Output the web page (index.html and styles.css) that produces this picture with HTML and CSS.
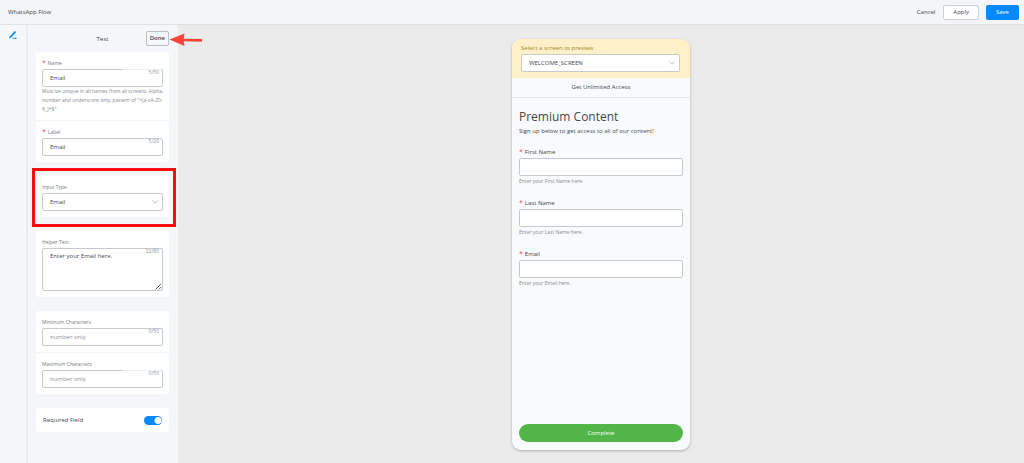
FILE: index.html
```
<!DOCTYPE html>
<html lang="en">
<head>
    <meta charset="UTF-8">
    <meta name="viewport" content="width=device-width, initial-scale=1.0">
    <title>WhatsApp Flow</title>
    <link rel="stylesheet" href="styles.css">
</head>
<body>
    <header class="topbar">
        <h1 class="topbar-title">WhatsApp Flow</h1>
        <div class="topbar-actions">
            <button class="btn btn-link" type="button">Cancel</button>
            <button class="btn btn-outline" type="button">Apply</button>
            <button class="btn btn-primary" type="button">Save</button>
        </div>
    </header>

    <div class="workspace">
        <nav class="rail">
            <button class="rail-button" type="button" aria-label="Edit">
                <svg width="10" height="10" viewBox="0 0 10 10">
                    <path d="M1.2 7.2 L6.2 1.4 Q6.8 0.8 7.4 1.4 L7.8 1.8 Q8.2 2.3 7.7 2.8 L3 7.7 L0.9 8.4 Z" fill="#0d8bf5"/>
                    <path d="M4.6 8.3 H8.6" stroke="#0d8bf5" stroke-width="1"/>
                </svg>
            </button>
        </nav>

        <aside class="panel">
            <div class="panel-head">
                <h2 class="panel-title">Text</h2>
                <button class="done" type="button">Done</button>
                <svg class="arrow" width="34" height="14" viewBox="0 0 34 14">
                    <path d="M14 7 L33 7.4" stroke="#fb4437" stroke-width="2.6"/>
                    <path d="M0.5 6.5 L15.5 0.5 L14.5 7 L15.5 13 Z" fill="#fb4437"/>
                </svg>
            </div>

            <section class="card">
                <div class="field">
                    <label class="label required" for="name">Name</label>
                    <div class="control notched">
                        <input class="input" id="name" type="text" value="Email">
                        <span class="count">5/50</span>
                    </div>
                    <p class="hint">Must be unique in all names from all screens. Alpha, number and underscore only, pattern of "^[a-zA-Z0-<wbr>9_]+$"</p>
                </div>
                <div class="field">
                    <label class="label required" for="label">Label</label>
                    <div class="control">
                        <input class="input" id="label" type="text" value="Email">
                        <span class="count">5/20</span>
                    </div>
                </div>
            </section>

            <section class="card highlighted">
                <div class="field">
                    <label class="label" for="type">Input Type</label>
                    <div class="control">
                        <select class="input" id="type">
                            <option>Email</option>
                        </select>
                        <svg class="chevron" width="6" height="4" viewBox="0 0 6 4"><path d="M0.5 0.5 L3 3.2 L5.5 0.5" fill="none" stroke="#a9afb8" stroke-width="0.8"/></svg>
                    </div>
                </div>
            </section>

            <section class="card">
                <div class="field">
                    <label class="label" for="helper">Helper Text</label>
                    <div class="control">
                        <textarea class="input textarea" id="helper">Enter your Email here.</textarea>
                        <span class="count">22/80</span>
                        <svg class="grip" width="7" height="7" viewBox="0 0 7 7"><path d="M0.5 6.5 L6 1 M3.8 6.5 L6.3 4" stroke="#555" stroke-width="0.9"/></svg>
                    </div>
                </div>
            </section>

            <section class="card">
                <div class="field">
                    <label class="label" for="min">Minimum Characters</label>
                    <div class="control">
                        <input class="input" id="min" type="text" placeholder="number only">
                        <span class="count">0/50</span>
                    </div>
                </div>
                <div class="field">
                    <label class="label" for="max">Maximum Characters</label>
                    <div class="control notched">
                        <input class="input" id="max" type="text" placeholder="number only">
                        <span class="count">0/50</span>
                    </div>
                </div>
            </section>

            <section class="card switch-row">
                <label for="required">Required Field</label>
                <input class="switch" id="required" type="checkbox" checked>
            </section>
        </aside>

        <main class="canvas">
            <div class="phone">
                <div class="picker">
                    <label class="picker-label" for="screen">Select a screen to preview</label>
                    <div class="control">
                        <select class="input" id="screen">
                            <option>WELCOME_SCREEN</option>
                        </select>
                        <svg class="chevron" width="6" height="4" viewBox="0 0 6 4"><path d="M0.5 0.5 L3 3.2 L5.5 0.5" fill="none" stroke="#a9afb8" stroke-width="0.8"/></svg>
                    </div>
                </div>
                <div class="phone-title">Get Unlimited Access</div>
                <form class="phone-body">
                    <h2 class="heading">Premium Content</h2>
                    <p class="lead">Sign up below to get access to all of our content!</p>
                    <div class="entry">
                        <label class="entry-label required" for="first">First Name</label>
                        <input class="input" id="first" type="text">
                        <p class="entry-hint">Enter your First Name here.</p>
                    </div>
                    <div class="entry">
                        <label class="entry-label required" for="last">Last Name</label>
                        <input class="input" id="last" type="text">
                        <p class="entry-hint">Enter your Last Name here.</p>
                    </div>
                    <div class="entry">
                        <label class="entry-label required" for="email">Email</label>
                        <input class="input" id="email" type="text">
                        <p class="entry-hint">Enter your Email here.</p>
                    </div>
                    <button class="complete" type="button">Complete</button>
                </form>
            </div>
        </main>
    </div>
</body>
</html>
```
FILE: styles.css
```
* {
    margin: 0;
    padding: 0;
    box-sizing: border-box;
}

body {
    font-family: "Open Sans", "Noto Sans", sans-serif;
    font-size: 6px;
    color: #42474f;
    background: #ebebeb;
    min-height: 100vh;
    display: flex;
    flex-direction: column;
}

button,
input,
select,
textarea {
    font: inherit;
    color: inherit;
}

button {
    cursor: pointer;
}

.topbar {
    display: flex;
    align-items: center;
    justify-content: space-between;
    height: 25px;
    padding: 0 5px 0 8px;
    background: #f4f5f8;
    border-bottom: 1px solid #dfe1e4;
}

.topbar-title {
    font-size: 6px;
    font-weight: 400;
}

.topbar-actions {
    display: flex;
    gap: 7px;
}

.btn {
    height: 15px;
    padding: 0 9px;
    line-height: 13px;
    border: 1px solid transparent;
    border-radius: 2px;
}

.btn-link {
    padding: 0;
    background: none;
}

.btn-outline {
    background: #fff;
    border-color: #cdd1d7;
}

.btn-primary {
    background: #0788fb;
    color: #fff;
}

.workspace {
    flex: 1;
    display: flex;
}

.rail {
    width: 28px;
    padding: 5px 8px;
    background: #f6f7f9;
    border-right: 2px solid #ebecef;
}

.rail-button {
    border: none;
    background: none;
}

.panel {
    width: 150px;
    padding: 6px 9px 14px 8px;
    background: #f5f6f9;
    display: flex;
    flex-direction: column;
    gap: 14px;
}

.panel-head {
    position: relative;
    display: grid;
    grid-template-columns: 1fr auto 1fr;
    align-items: center;
    margin-bottom: -8px;
}

.panel-title {
    grid-column: 2;
    font-size: 6px;
    font-weight: 400;
}

.done {
    justify-self: end;
    height: 15px;
    padding: 0 3px;
    font-weight: 600;
    line-height: 13px;
    background: #f5f6f9;
    border: 1px solid #b9bec7;
    border-radius: 2px;
}

.arrow {
    position: absolute;
    left: 100%;
    top: 2px;
}

.card {
    background: #fff;
    border-radius: 3px;
}

.highlighted {
    position: relative;
}

.highlighted::after {
    content: "";
    position: absolute;
    inset: -8px -7px -10px -4px;
    border: 3px solid #f90d0d;
    pointer-events: none;
}

.field {
    padding: 5px 6px 6px;
}

.field + .field {
    border-top: 1px solid #f3f4f5;
}

.label {
    display: block;
    font-size: 5px;
    line-height: 12px;
    color: #747a83;
}

.required::before {
    content: "*";
    margin-right: 2px;
    font-size: 7px;
    line-height: 1;
    color: #ef5350;
}

.control {
    position: relative;
}

.input {
    display: block;
    width: 100%;
    height: 18px;
    padding: 0 7px;
    background: #fff;
    border: 1px solid #c5cacf;
    border-radius: 2px;
    outline: none;
    appearance: none;
}

.input::placeholder {
    color: #8d9299;
}

.textarea {
    height: 43px;
    padding: 2px 7px;
    line-height: 10px;
    resize: none;
}

.count {
    position: absolute;
    top: 0;
    right: 4px;
    font-size: 5px;
    line-height: 6px;
    color: #8d939b;
}

.notched::after {
    content: "";
    position: absolute;
    top: 0;
    right: 2px;
    width: 38px;
    height: 1px;
    background: #eceef0;
}

.chevron {
    position: absolute;
    top: 7px;
    right: 5px;
}

.grip {
    position: absolute;
    right: 1px;
    bottom: 1px;
}

.hint {
    margin-right: -6px;
    font-size: 5px;
    line-height: 9px;
    color: #838992;
}

.switch-row {
    display: flex;
    align-items: center;
    justify-content: space-between;
    height: 24px;
    padding: 0 7px;
}

.switch {
    appearance: none;
    width: 18px;
    height: 9px;
    border-radius: 5px;
    background: radial-gradient(circle at 14px 50%, #fff 3px, #0788fb 4px);
}

.canvas {
    flex: 1;
    display: flex;
    justify-content: center;
    padding: 14px 0 13px;
}

.phone {
    width: 178px;
    display: flex;
    flex-direction: column;
    background: #f8fafc;
    border-radius: 9px;
    box-shadow: 0 1px 3px rgba(0, 0, 0, 0.25);
    overflow: hidden;
}

.picker {
    padding: 4px 10px 6px 9px;
    background: #fef0c8;
}

.picker-label {
    display: block;
    line-height: 11px;
    color: #a68629;
}

.phone-title {
    height: 20px;
    line-height: 19px;
    text-align: center;
    border-bottom: 1px solid #e4e7ea;
}

.phone-body {
    flex: 1;
    display: flex;
    flex-direction: column;
    padding: 10px 7px 8px;
}

.heading {
    font-size: 12px;
    font-weight: 400;
    line-height: 18px;
}

.lead {
    line-height: 11px;
    margin-bottom: 9px;
}

.entry {
    margin-bottom: 11px;
}

.entry-label {
    display: block;
    line-height: 12px;
}

.entry-hint {
    font-size: 5px;
    line-height: 10px;
    color: #838992;
}

.complete {
    height: 18px;
    margin-top: auto;
    color: #fff;
    background: #52b547;
    border: none;
    border-radius: 9px;
}
```
